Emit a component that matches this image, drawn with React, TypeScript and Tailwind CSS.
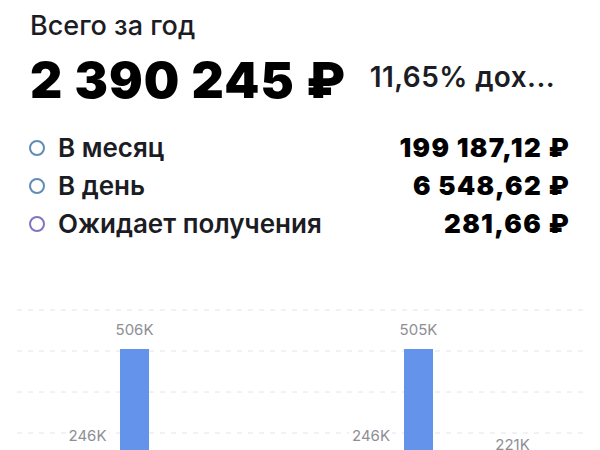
const rows = [
  { label: "В месяц", value: "199 187,12 ₽", ring: "border-[#5f8db6]" },
  { label: "В день", value: "6 548,62 ₽", ring: "border-[#5f8db6]" },
  { label: "Ожидает получения", value: "281,66 ₽", ring: "border-[#8474bd]" },
];

function Chart() {
  const grid = [20, 61, 102, 143];
  return (
    <svg width="600" height="160" viewBox="0 0 600 160" className="block">
      {grid.map((y) => (
        <line key={y} x1="17" x2="584" y1={y} y2={y} stroke="#e4e4e8" strokeWidth="1" strokeDasharray="5 6" />
      ))}
      <rect x="120" y="59" width="29" height="120" fill="#6393ea" />
      <rect x="404" y="59" width="29" height="120" fill="#6393ea" />
      <g fontFamily="Inter, 'Liberation Sans', sans-serif" fontSize="15" fill="#8e8e95">
        <text x="134.5" y="45" textAnchor="middle">506K</text>
        <text x="418.5" y="45" textAnchor="middle">505K</text>
        <rect x="66" y="136" width="43" height="16" fill="#fff" />
        <text x="87.5" y="151" textAnchor="middle">246K</text>
        <rect x="349" y="136" width="43" height="16" fill="#fff" />
        <text x="371" y="151" textAnchor="middle">246K</text>
        <text x="512.5" y="160" textAnchor="middle">221K</text>
      </g>
    </svg>
  );
}

export default function App() {
  return (
    <div className="w-[600px] h-[450px] overflow-hidden bg-white text-[#1c1c24] font-[Inter,'Noto_Sans',sans-serif]">
      <div className="pl-[30px] pt-[10px]">
        <p className="text-[27px] leading-[32px] font-medium">Всего за год</p>

        <div className="mt-[10px] flex items-center gap-[24px]">
          <span className="text-[50px] leading-[56px] font-black tracking-[1.1px] text-black">2 390 245 ₽</span>
          <span className="text-[28px] leading-[32px] font-semibold tracking-[0.4px] -mt-[6px]">11,65% дох...</span>
        </div>
      </div>

      {/* breakdown */}
      <div className="mt-[21px] pl-[29px] pr-[30px]">
        {rows.map((r) => (
          <div key={r.label} className="h-[38px] flex items-center justify-between">
            <div className="flex items-center gap-[13px]">
              <span className={`w-[16px] h-[16px] rounded-full border-2 ${r.ring}`} />
              <span className="text-[26px] leading-[30px] font-semibold">{r.label}</span>
            </div>
            <span className="text-[26px] leading-[30px] font-black tracking-[1.3px] text-black">{r.value}</span>
          </div>
        ))}
      </div>

      <div className="mt-[47px]">
        <Chart />
      </div>
    </div>
  );
}
